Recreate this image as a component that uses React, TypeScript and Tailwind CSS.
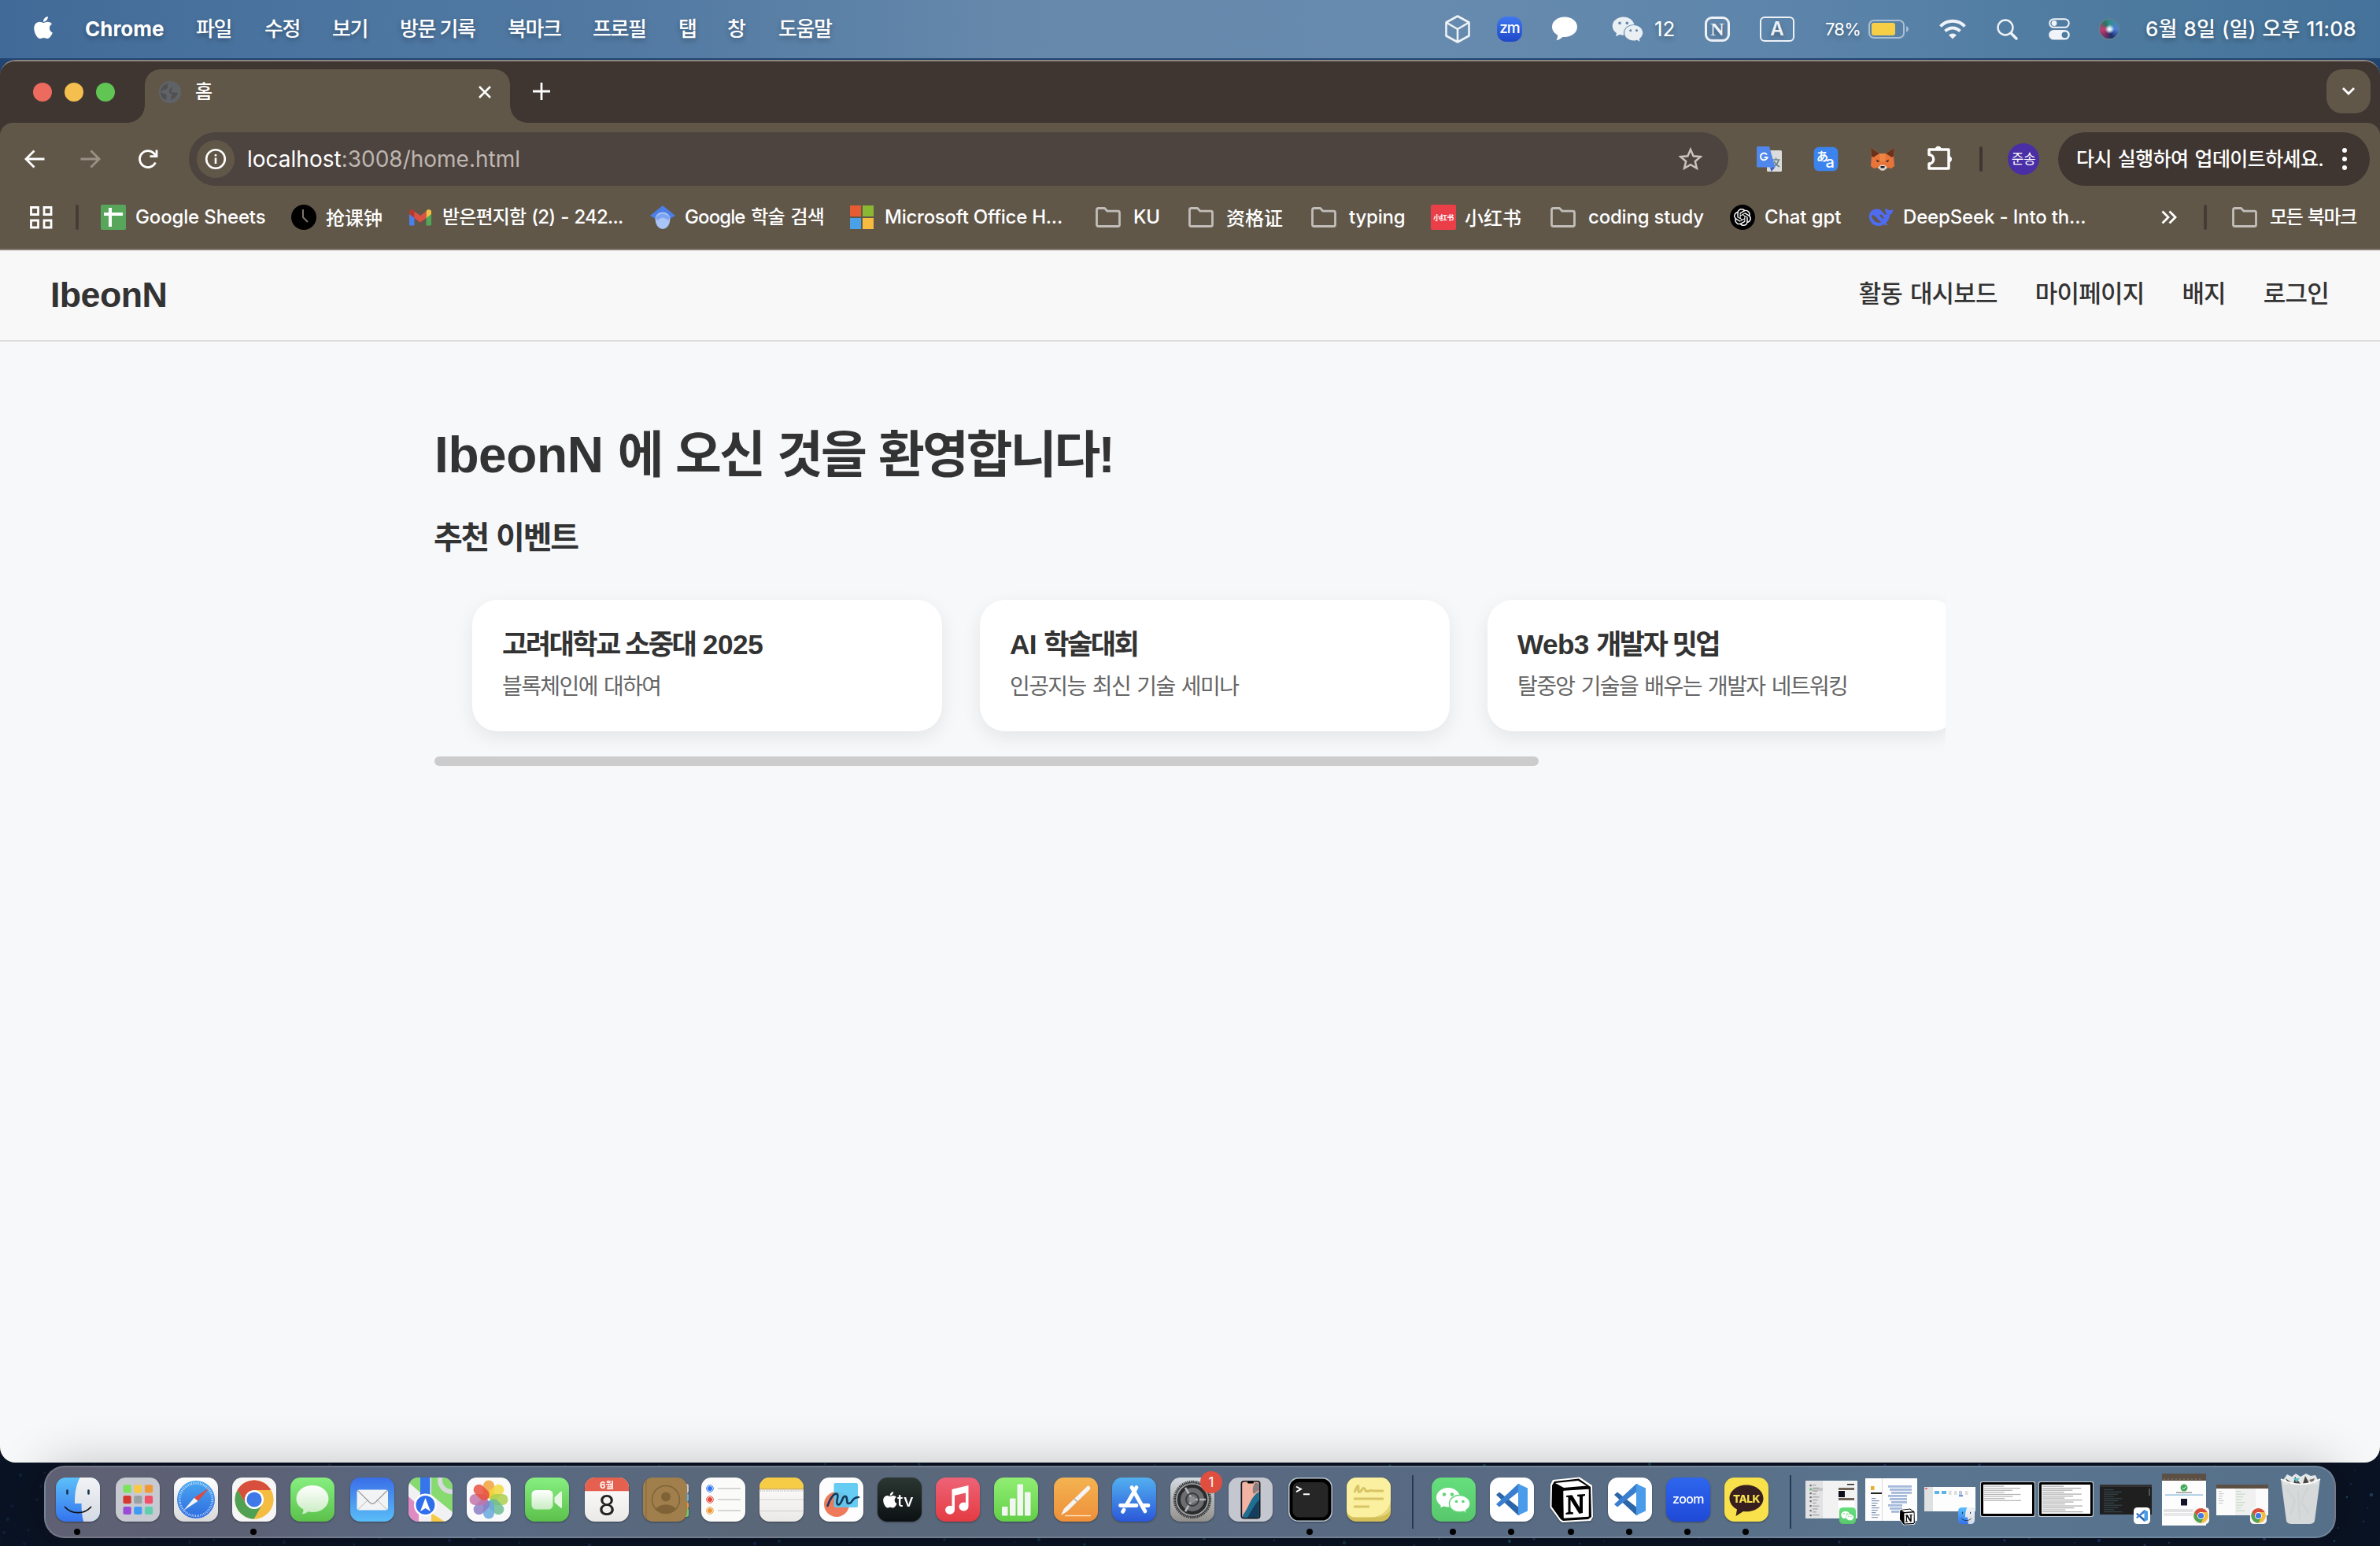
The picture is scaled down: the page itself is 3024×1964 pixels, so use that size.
import type { ReactNode } from "react";
import { FaApple } from "react-icons/fa";
import { AiFillWechat } from "react-icons/ai";
import { SiOpenai } from "react-icons/si";

/* ---------- shared logos ---------- */

function ChromeLogo() {
  return (
    <g>
      <circle cx="28" cy="28" r="24.5" fill="#f4bd41" />
      <path d="M28 28 L6.8 15.8 A24.5 24.5 0 0 1 49.2 15.8 Z" fill="#d94f3d" />
      <path d="M28 16 H49.2 A24.5 24.5 0 0 0 6.8 15.8 L17.6 34 Z" fill="#d94f3d" />
      <path d="M6.8 15.8 A24.5 24.5 0 0 0 28 52.5 L38.4 34 L28 28 L17.6 34 Z" fill="#50a154" />
      <path d="M38.4 34 L28 52.5 A24.5 24.5 0 0 0 49.2 16 H28 Z" fill="#f4bd41" />
      <circle cx="28" cy="28" r="12" fill="#fff" />
      <circle cx="28" cy="28" r="9.6" fill="#3f79e8" />
    </g>
  );
}

function CodeLogo() {
  return (
    <g>
      <path d="M8 22 L12 18.5 L38 39 V47.5 L36 48 Z" fill="#2a66a8" />
      <path d="M8 34 L12 37.5 L38 17 V8.500 L36 8 Z" fill="#3a7fcf" />
      <path d="M36 8 L48 13.500 V42.500 L36 48 Z" fill="#4a9bea" />
    </g>
  );
}

function ChatPair() {
  return (
    <g>
      <path
        d="M21 13 C12.500 13 6 18.600 6 25.500 C6 29.600 8.200 33 11.500 35.200 L11.500 38 L15.500 36.600 C17.300 37.200 19 37.500 21 37.500 C29.300 37.500 36 32.300 36 25.500 C36 18.600 29.500 13 21 13 Z"
        fill="#fff"
      />
      <circle cx="16" cy="21.500" r="2.200" fill="#5fd475" />
      <circle cx="26" cy="21.500" r="2.200" fill="#5fd475" />
      <path
        d="M35.500 22.500 C28 22.500 22.500 27.400 22.500 33.300 C22.500 39.400 28 44 35.500 44 C37.200 44 38.800 43.700 40.300 43.200 L44 45 L43.700 41.700 C47 39.600 49 36.700 49 33.300 C49 27.400 43 22.500 35.500 22.500 Z"
        fill="#fff"
        stroke="#62d578"
        strokeWidth="1.500"
      />
      <circle cx="31.500" cy="30.500" r="1.800" fill="#5fd475" />
      <circle cx="40" cy="30.500" r="1.800" fill="#5fd475" />
    </g>
  );
}

function FinderFace() {
  return (
    <g>
      <rect width="56" height="56" rx="12.500" fill="url(#finderBlue)" />
      <path d="M30.500 0 H43.500 A12.500 12.500 0 0 1 56 12.500 V43.500 A12.500 12.500 0 0 1 43.500 56 H35 C33.500 50 32.500 42 32.500 33 H24.500 C23.500 33 24 32 24 31 C24 19 26 9 30.500 0 Z" fill="url(#finderWhite)" />
      <path d="M14.500 16.500 V20.500 M41.500 16.500 V20.500" stroke="#16324f" strokeWidth="2.600" strokeLinecap="round" />
      <path d="M11.500 37.500 C20 47 36 47 44.500 37.500" fill="none" stroke="#111" strokeWidth="1.800" strokeLinecap="round" />
    </g>
  );
}

function NotionCube() {
  return (
    <g>
      <path d="M1 9 L4 3 L38 -0.500 L54 10 L55 50 L52 55 L16 57 L13 55 L0.500 38 Z" fill="#fff" />
      <path d="M3 10 L6 5 L37 1.500 L52 12 L53 50 L49 53 L17 55 L14 53 L2.500 37 Z" fill="#000" />
      <path d="M7 7 L36 4 L47 10.500 L18 13 Z" fill="#fff" />
      <path d="M18 17.500 L49 15.500 V49 L18.500 51 Z" fill="#fff" stroke="#fff" strokeWidth="1.500" strokeLinejoin="round" />
      <path d="M21 23 L28.500 22.300 L38 38 V24.500 L35 23.800 V21.700 L45 21 V23 L42 24 V45 L37.500 46 L26.500 28.500 V43.500 L30 44.500 V46.500 L20.500 47 V45 L23.500 44 V25 L21 24.800 Z" fill="#000" />
    </g>
  );
}

function Tile({ fill, children }: { fill: string; children?: ReactNode }) {
  return (
    <>
      <rect width="56" height="56" rx="12.500" fill={fill} />
      {children}
    </>
  );
}

/* ---------- dock icons (56 x 56 units) ---------- */

const launchColors = ["#7be35c", "#f7c945", "#ef9a37", "#d5382f", "#98a0a3", "#f0506a", "#9a4bd8", "#3f9bf5", "#5fcfae"];
const petals = ["#f2a23c", "#f0d83b", "#a9cf4d", "#6dbd92", "#6aa7dc", "#8b7cc4", "#c176a8", "#e8503e"];

const apps: Record<string, ReactNode> = {
  finder: <FinderFace />,
  launchpad: (
    <Tile fill="#c8cad2">
      {launchColors.map((c, i) => (
        <rect key={c} x={9.500 + (i % 3) * 13.700} y={9.300 + Math.floor(i / 3) * 13.800} width="10.200" height="10.200" rx="2" fill={c} />
      ))}
    </Tile>
  ),
  safari: (
    <Tile fill="url(#whiteGrey)">
      <circle cx="28" cy="28" r="24" fill="url(#safariBlue)" />
      <circle cx="28" cy="28" r="20.800" fill="none" stroke="#e6f2ff" strokeWidth="3" strokeDasharray="0.700 1.480" />
      <path d="M45 13 L30.500 30 L25.800 25.700 Z" fill="#e2473c" />
      <path d="M12 42 L30.500 30 L25.800 25.700 Z" fill="#f3f4f6" />
    </Tile>
  ),
  chrome: (
    <Tile fill="#f6f6f6">
      <ChromeLogo />
    </Tile>
  ),
  messages: (
    <Tile fill="url(#green)">
      <path d="M28 10 C16 10 7.500 17.500 7.500 27 C7.500 33 11 37.500 16.500 40.500 C16.500 43 15.700 45 14.500 46.500 C18 46.300 20.500 45 22.300 43.300 C24 43.800 26 44 28 44 C40 44 48.500 36.500 48.500 27 C48.500 17.500 40 10 28 10 Z" fill="url(#bubble)" />
    </Tile>
  ),
  mail: (
    <Tile fill="url(#mailBlue)">
      <rect x="8.500" y="15.500" width="39.500" height="26" rx="3" fill="#f2f3f4" />
      <path d="M9.500 41 L23 28 M47 41 L33.500 28" stroke="#b4b6b9" strokeWidth="1" />
      <path d="M9.500 16.500 L24.500 31.500 Q28.200 35 32 31.500 L47 16.500" fill="none" stroke="#9b9da0" strokeWidth="1.200" />
    </Tile>
  ),
  maps: (
    <g clipPath="url(#tileClip)">
      <rect width="56" height="56" fill="#f1f1f3" />
      <path d="M0 0 H16 V20 L0 6 Z M29 0 H56 V44 L29 22 Z" fill="#86da6f" />
      <path d="M0 24 L13 36 V56 H0 Z" fill="#e08ac4" />
      <path d="M46 56 L26 40 V22 L56 48 V56 Z" fill="#f1f1f3" />
      <path d="M29 45 L46 56 H29 Z" fill="#f6ca45" />
      <rect x="15" width="12.500" height="30" fill="#3574ea" />
      <circle cx="55" cy="3" r="15" fill="none" stroke="#d7d9dc" strokeWidth="6" />
      <circle cx="21.500" cy="35" r="14.500" fill="#fff" />
      <circle cx="21.500" cy="35" r="12" fill="#2f6fee" />
      <path d="M21.500 26 L28 43 L21.500 39 L15 43 Z" fill="#fff" />
    </g>
  ),
  photos: (
    <Tile fill="#fafafa">
      {petals.map((c, i) => (
        <rect key={c} x="21" y="3.500" width="14" height="23" rx="7" fill={c} fillOpacity="0.850" transform={`rotate(${i * 45} 28 28)`} />
      ))}
    </Tile>
  ),
  facetime: (
    <Tile fill="url(#green)">
      <rect x="8.500" y="16" width="27" height="24.500" rx="5.500" fill="url(#bubble)" />
      <path d="M37.500 25 L45.500 17.800 Q47 17 47 19 V38 Q47 39.500 45.500 38.500 L37.500 31.500 Z" fill="#e6f6e2" />
    </Tile>
  ),
  calendar: (
    <Tile fill="url(#paper)">
      <path d="M0 17.300 V12.500 A12.500 12.500 0 0 1 12.500 0 H43.500 A12.500 12.500 0 0 1 56 12.500 V17.300 Z" fill="#e5604f" />
      <text x="28" y="13.500" textAnchor="middle" fontSize="11.500" fontWeight="700" fill="#fff" fontFamily="Inter, 'Noto Sans CJK KR', sans-serif">6월</text>
      <text x="28" y="47.500" textAnchor="middle" fontSize="35" fontWeight="400" fill="#222" fontFamily="Inter, sans-serif">8</text>
    </Tile>
  ),
  contacts: (
    <g>
      <rect x="50" y="8" width="8" height="12" rx="3" fill="#c9c9c9" />
      <rect x="50" y="20" width="8" height="11" rx="3" fill="#63b4e8" />
      <rect x="50" y="31" width="8" height="9" rx="3" fill="#ef9336" />
      <rect x="50" y="39" width="8" height="11" rx="3" fill="#69d36b" />
      <rect width="56" height="56" rx="12.500" fill="#a07f4c" />
      <path d="M4 3 V53" stroke="#86683a" strokeWidth="1" />
      <circle cx="29" cy="28" r="17.500" fill="none" stroke="#7f6336" strokeWidth="1.500" />
      <circle cx="29" cy="24.500" r="6" fill="#7f6336" />
      <path d="M16.500 40 C20 32.500 38 32.500 41.500 40 C36 47 22 47 16.500 40 Z" fill="#7f6336" />
    </g>
  ),
  reminders: (
    <Tile fill="#fbfbfa">
      {["#2f74ee", "#e4473a", "#ee9733"].map((c, i) => (
        <g key={c}>
          <circle cx="11" cy={14 + i * 14} r="4.300" fill="none" stroke={c} strokeWidth="1" />
          <circle cx="11" cy={14 + i * 14} r="3" fill={c} />
          <path d={`M21 ${14 + i * 14} H50`} stroke="#c9c9ca" strokeWidth="1.500" />
        </g>
      ))}
    </Tile>
  ),
  notes: (
    <Tile fill="url(#paper)">
      <path d="M0 14 V12.500 A12.500 12.500 0 0 1 12.500 0 H43.500 A12.500 12.500 0 0 1 56 12.500 V14 Z" fill="#f6cb45" />
      <path d="M0 14.800 H56" stroke="#b9912f" strokeWidth="1" />
      <path d="M1 17 H56" stroke="#bbb" strokeWidth="1.500" strokeDasharray="1 1.300" />
      <path d="M0 28 H56 M0 42.500 H56" stroke="#cfcfcf" strokeWidth="1" />
    </Tile>
  ),
  freeform: (
    <Tile fill="#fdfdfd">
      <circle cx="22" cy="34" r="16" fill="#ee7a5b" />
      <rect x="18.500" y="7" width="30.500" height="31" rx="2" fill="#5bc8f2" fillOpacity="0.930" />
      <path d="M10.500 36 C14 26 19 19 22.500 21 C26 23 19 33 24 34.500 C29 35 29 22 33.500 24 C37 26 33 33.500 38 33 C43 32 41 25 50 25" fill="none" stroke="#123b5d" strokeWidth="2.600" strokeLinecap="round" />
    </Tile>
  ),
  tv: (
    <Tile fill="url(#tvDark)">
      <g transform="translate(7 16.500) scale(0.046)" fill="#fff">
        <path d="M318.700 268.700c-.2-36.700 16.400-64.400 50-84.800-18.800-26.900-47.200-41.700-84.700-44.600-35.500-2.800-74.300 20.700-88.500 20.700-15 0-49.400-19.700-76.400-19.700C63.300 141.200 4 184.800 4 273.500q0 39.300 14.400 81.200c12.800 36.700 59 126.700 107.200 125.200 25.200-.6 43-17.900 75.800-17.900 31.800 0 48.300 17.900 76.400 17.900 48.600-.7 90.400-82.500 102.600-119.300-65.200-30.700-61.700-90-61.700-91.900zm-56.600-164.200c27.300-32.400 24.800-61.900 24-72.500-24.100 1.400-52 16.400-67.900 34.900-17.500 19.800-27.800 44.300-25.600 71.900 26.100 2 49.900-11.400 69.500-34.300z" />
      </g>
      <text x="25" y="36.500" fontSize="22" fontWeight="500" fill="#fff" fontFamily="Inter, sans-serif">tv</text>
    </Tile>
  ),
  music: (
    <Tile fill="url(#musicRed)">
      <path d="M20.500 15 L41.500 10 V36.500 A6 5.500 0 1 1 38 32 V19.500 L24 22.800 V41 A6 5.500 0 1 1 20.500 36.200 Z" fill="#fff" />
    </Tile>
  ),
  numbers: (
    <Tile fill="url(#numbersGreen)">
      <rect x="10" y="37" width="7.500" height="11.500" rx="1" fill="#f3f7f2" />
      <rect x="20" y="26.500" width="7.500" height="22" rx="1" fill="#f3f7f2" />
      <rect x="29.500" y="8.500" width="7.500" height="40" rx="1" fill="#f3f7f2" />
      <rect x="39" y="18.500" width="7.500" height="30" rx="1" fill="#f3f7f2" />
    </Tile>
  ),
  pages: (
    <Tile fill="url(#pagesOrange)">
      <path d="M43 10.500 Q47 10.500 46 15 L17 43 L9 48 L13 39.500 Z" fill="#f4f4f5" />
      <path d="M26 27 L30 31" stroke="#a9a9ad" strokeWidth="1.500" />
      <path d="M14 48.500 H47" stroke="#ffe0b8" strokeWidth="1.600" />
    </Tile>
  ),
  appstore: (
    <Tile fill="url(#storeBlue)">
      <path d="M31 12.500 L17.500 36 M25 12.500 L42 43 M10.500 35.500 H31 M38 35.500 H46 M15 41 L13.500 43.500" stroke="#fff" strokeWidth="4.800" strokeLinecap="round" />
    </Tile>
  ),
  settings: (
    <Tile fill="url(#settingsGrey)">
      <circle cx="28" cy="28" r="22.500" fill="#6b6d70" stroke="#36383a" strokeWidth="3.500" strokeDasharray="1.400 0.900" />
      <circle cx="28" cy="28" r="17.500" fill="none" stroke="#2a2b2d" strokeWidth="5" />
      <circle cx="28" cy="28" r="20" fill="none" stroke="#a5a7a8" strokeWidth="1.500" />
      <path d="M28 28 H45 M28 28 L19 13 M28 28 L19 43" stroke="#b3b5b6" strokeWidth="2.600" />
      <circle cx="28" cy="28" r="8" fill="none" stroke="#3a3b3d" strokeWidth="2" />
      <circle cx="28" cy="28" r="4" fill="#8b8d8f" />
    </Tile>
  ),
  mirroring: (
    <Tile fill="#c4c7cf">
      <rect x="15.500" y="4" width="25" height="48.500" rx="4" fill="#17181b" />
      <rect x="17.200" y="5.500" width="21.600" height="45.500" rx="2.800" fill="#f1b3a2" />
      <path d="M38.800 18 C28 24 26 38 18 48 V51 H36 Q38.800 51 38.800 48 Z" fill="#1f6f93" />
      <path d="M38.800 28 C32 36 28 44 24 51 H36 Q38.800 51 38.800 48 Z" fill="#153e5c" />
      <path d="M34 6 C30 12 30 18 32 21 L38.800 16 V8 Z" fill="#8c7f80" />
      <rect x="24" y="5" width="8" height="2.600" rx="1.300" fill="#000" />
    </Tile>
  ),
  terminal: (
    <Tile fill="#b9c6cf">
      <rect x="1.500" y="1.500" width="53" height="53" rx="11.500" fill="#000" />
      <rect x="5.500" y="6" width="45" height="44.500" rx="8" fill="#262626" />
      <path d="M10 11.500 L16 14.800 L10 18.200 M19 21.300 H27" fill="none" stroke="#fff" strokeWidth="1.900" />
    </Tile>
  ),
  stickies: (
    <Tile fill="#d2bf58">
      <path d="M12.500 0 H43.500 A12.500 12.500 0 0 1 56 12.500 V30 C54 42 44 50 32 50.500 H10 A10 10 0 0 1 0 41 V12.500 A12.500 12.500 0 0 1 12.500 0 Z" fill="#faf0a0" />
      <path d="M56 30 C54 42 44 50 32 50.500 C44 50.500 52 48 55.500 42 Z" fill="#e5d67c" />
      <path d="M10 19 C13 11 15 8 15 13 C14 20 16 20 20 15 C21 12 24 14 24 17 C27 19 30 15 33 17 H47 M9 27 H47 M9 37 H29" fill="none" stroke="#d8c466" strokeWidth="3" />
    </Tile>
  ),
  wechat: (
    <Tile fill="url(#wechatGreen)">
      <ChatPair />
    </Tile>
  ),
  vscode: (
    <Tile fill="#fff">
      <CodeLogo />
    </Tile>
  ),
  notion: <NotionCube />,
  zoom: (
    <Tile fill="url(#zoomBlue)">
      <text x="28" y="32.500" textAnchor="middle" fontSize="16" fontWeight="500" letterSpacing="-0.600" fill="#fff" fontFamily="Inter, sans-serif">zoom</text>
    </Tile>
  ),
  kakao: (
    <Tile fill="#f8e14b">
      <path d="M28 9.500 C16 9.500 6.500 17 6.500 26.500 C6.500 32.500 10.500 37.500 16 40.500 L14.500 49 L24 43 C25.300 43.200 26.600 43.300 28 43.300 C40 43.300 49.500 36 49.500 26.500 C49.500 17 40 9.500 28 9.500 Z" fill="#381f1f" />
      <text x="28" y="31.500" textAnchor="middle" fontSize="13.500" fontWeight="800" letterSpacing="-0.500" fill="#f8e14b" fontFamily="Inter, sans-serif">TALK</text>
    </Tile>
  ),
};

const stops: [string, string, string][] = [
  ["finderBlue", "#5cc0f8", "#3574ee"],
  ["finderWhite", "#f3f3f5", "#d3dae4"],
  ["whiteGrey", "#ffffff", "#d9d9d9"],
  ["safariBlue", "#4aa8f0", "#2e6be0"],
  ["green", "#86ef80", "#5cc14b"],
  ["bubble", "#ffffff", "#c9ecc2"],
  ["mailBlue", "#3a6ee8", "#5abdf7"],
  ["paper", "#ffffff", "#ebe9e6"],
  ["tvDark", "#2b3732", "#0c1012"],
  ["musicRed", "#ee6377", "#e43b42"],
  ["numbersGreen", "#91ef74", "#63ce48"],
  ["pagesOrange", "#f4b350", "#ee8f3a"],
  ["storeBlue", "#52b0f0", "#2b58d8"],
  ["settingsGrey", "#d3dae0", "#93908c"],
  ["wechatGreen", "#66df7d", "#58c76c"],
  ["zoomBlue", "#2f66ee", "#1f49d8"],
];

function Defs() {
  return (
    <svg className="absolute h-0 w-0">
      <defs>
        {stops.map(([id, from, to]) => (
          <linearGradient key={id} id={id} x1="0" y1="0" x2="0" y2="1">
            <stop offset="0" stopColor={from} />
            <stop offset="1" stopColor={to} />
          </linearGradient>
        ))}
        <clipPath id="tileClip">
          <rect width="56" height="56" rx="12.500" />
        </clipPath>
      </defs>
    </svg>
  );
}

function DockIcon({ name, wide, running, badge }: { name: string; wide?: boolean; running?: boolean; badge?: string }) {
  return (
    <div className={`relative h-[56px] w-[56px] shrink-0 ${wide ? "ml-[2px]" : ""}`}>
      <svg viewBox="0 0 56 56" className="h-[56px] w-[56px] overflow-visible drop-shadow-[0_1px_1px_rgba(0,0,0,0.35)]">
        {apps[name]}
      </svg>
      {badge && (
        <span className="absolute -top-[8px] left-[38px] flex h-[28px] w-[28px] items-center justify-center rounded-full bg-[#e04e40] text-[17px] leading-none text-white">
          {badge}
        </span>
      )}
      {running && <span className="absolute top-[65px] left-[23px] h-2 w-2 rounded-full bg-black" />}
    </div>
  );
}

/* ---------- minimised windows ---------- */

function Lines({ x, y, n, w, gap, color }: { x: number; y: number; n: number; w: number; gap: number; color: string }) {
  return (
    <>
      {Array.from({ length: n }, (_, i) => (
        <rect key={i} x={x} y={y + i * gap} width={w * (0.45 + ((i * 37) % 55) / 100)} height="1.200" fill={color} />
      ))}
    </>
  );
}

function MiniWindow({ w, h, children }: { w: number; h: number; children: ReactNode }) {
  return (
    <svg viewBox={`0 0 ${w} ${h}`} width={w} height={h} className="shrink-0">
      {children}
    </svg>
  );
}

function Badge({ name, className }: { name: string; className: string }) {
  return (
    <svg viewBox="0 0 56 56" className={`absolute h-[21px] w-[21px] overflow-visible ${className}`}>
      {apps[name]}
    </svg>
  );
}

function MinimisedWindows() {
  return (
    <div className="flex h-[66px] items-start">
      <div className="relative mt-[9px] mr-[10px]">
        <MiniWindow w={66} h={48}>
          <rect width="66" height="48" fill="#f2f2f3" />
          <rect width="22" height="48" fill="#e2e2e4" />
          <rect x="5" y="9" width="17" height="4" fill="#c7c7c9" />
          <Lines x={9} y={5} n={11} w={10} gap={3.800} color="#a2a2a4" />
          {[5, 10, 15, 20, 25, 31, 37, 43].map((y) => (
            <rect key={y} x="5.500" y={y} width="2.200" height="2.200" fill={y === 10 ? "#4fc26a" : "#666"} />
          ))}
          <rect x="42" y="9" width="20" height="3" fill="#6f6257" />
          <rect x="42" y="13" width="8" height="8" fill="#10101c" />
          <rect x="42" y="22" width="20" height="3" fill="#6f6257" />
          <rect x="42" y="25" width="20" height="10" fill="#fff" />
          <rect x="53" y="4" width="9" height="1.500" fill="#222" />
        </MiniWindow>
        <Badge name="wechat" className="top-[34px] left-[43px]" />
      </div>
      <div className="relative mt-[6px] mr-[9px]">
        <MiniWindow w={66} h={54}>
          <rect width="66" height="54" fill="#fdfdfd" />
          <rect x="7" y="10" width="4.500" height="5" fill="#e4b22f" />
          <rect x="7" y="18" width="14" height="2" fill="#222" />
          <Lines x={8} y={25} n={9} w={12} gap={3} color="#8396b5" />
          <path d="M21.500 0 V54" stroke="#ddd" />
          {[9, 13, 17, 21, 25, 29, 33, 37, 41].map((y, i) => (
            <rect key={y} x={29 + (i % 3) * 2} y={y} width={30 - i * 2} height="2.800" fill="#a5b9da" />
          ))}
        </MiniWindow>
        <Badge name="notion" className="top-[38px] left-[43px]" />
      </div>
      <div className="relative mt-[17px] mr-[6px]">
        <MiniWindow w={65} h={31}>
          <rect width="65" height="31" fill="#fdfdfd" />
          <rect width="11" height="31" fill="#dfe0e2" />
          <path d="M1 2 H4" stroke="#e55" strokeWidth="1.500" />
          <rect x="13" y="5" width="6" height="4" fill="#5cb5ea" />
          <rect x="22" y="5" width="6" height="4" fill="#5cb5ea" />
          <rect x="31" y="5" width="3.500" height="5" fill="#ddd" />
          <rect x="38" y="5" width="3.500" height="5" fill="#ddd" />
          <rect x="44" y="5" width="4" height="5" fill="#bcc8dd" />
          <rect x="44" y="10.500" width="5" height="1.500" fill="#2a67d8" />
          <rect x="52" y="5" width="3.500" height="5" fill="#ddd" />
        </MiniWindow>
        <Badge name="finder" className="top-[26px] left-[43px]" />
      </div>
      <div className="mt-[10px] mr-[4px]">
        <MiniWindow w={70} h={45}>
          <rect width="70" height="45" rx="2" fill="#c9ced3" />
          <rect x="1" y="1" width="68" height="43" rx="2" fill="#000" />
          <rect x="4" y="4" width="62" height="37" fill="#fff" />
          <Lines x={5} y={5.500} n={8} w={56} gap={2.600} color="#b4b4b4" />
        </MiniWindow>
      </div>
      <div className="mt-[10px] mr-[8px]">
        <MiniWindow w={70} h={45}>
          <rect width="70" height="45" rx="2" fill="#c9ced3" />
          <rect x="1" y="1" width="68" height="43" rx="2" fill="#000" />
          <rect x="4" y="4" width="62" height="37" fill="#fff" />
          <Lines x={5} y={5.500} n={14} w={60} gap={2.500} color="#a8a8a8" />
        </MiniWindow>
      </div>
      <div className="relative mt-[14px] mr-[13px]">
        <MiniWindow w={66} h={38}>
          <rect width="66" height="38" fill="#1f1f20" />
          <rect width="66" height="3" fill="#313133" />
          <Lines x={5} y={6} n={11} w={28} gap={2.800} color="#35454a" />
          <rect x="62" y="5" width="2" height="9" fill="#555" />
        </MiniWindow>
        <Badge name="vscode" className="top-[29px] left-[43px]" />
      </div>
      <div className="relative mr-[13px]">
        <MiniWindow w={56} h={66}>
          <rect width="56" height="66" fill="#fdfdfd" />
          <rect width="56" height="9" fill="#5c5044" />
          <path d="M2 7 H50" stroke="#8d8078" strokeWidth="1" strokeDasharray="2 3" />
          <circle cx="28" cy="18" r="4.500" fill="#43a95a" />
          <path d="M26 18 L27.500 19.500 L30.500 16.500" fill="none" stroke="#fff" />
          <rect x="18" y="23.500" width="20" height="1.500" fill="#999" />
          <rect x="4" y="26.500" width="48" height="1.200" fill="#7cb4d8" />
          <rect x="24" y="32" width="8" height="8.500" fill="#14142c" />
          <rect x="2" y="45" width="44" height="4" fill="#e2e2e4" />
          <rect x="2" y="50" width="44" height="4" fill="#e8e8ea" />
        </MiniWindow>
        <Badge name="chrome" className="top-[43px] left-[39px]" />
      </div>
      <div className="relative mt-[14px] mr-[16px]">
        <MiniWindow w={66} h={39}>
          <rect width="66" height="39" fill="#fbfbfb" />
          <rect width="66" height="5" fill="#5c5044" />
          <rect x="24" y="5" width="26" height="34" fill="#f0f0f1" />
          <Lines x={25} y={8} n={8} w={14} gap={3.500} color="#c5dcc4" />
          <Lines x={3} y={8} n={6} w={8} gap={3} color="#ccc" />
        </MiniWindow>
        <Badge name="chrome" className="top-[29px] left-[43px]" />
      </div>
      <svg viewBox="0 0 50 64" className="h-[64px] w-[50px] overflow-visible">
        <path d="M3 8 L8 1 L14 4 L19 0 L25 4 L32 0 L38 3 L44 2 L47 8 V14 H3 Z" fill="#e4e7e8" />
        <path d="M6 6 L14 12 L10 14 Z M18 4 L25 13 L16 13 Z M31 3 L36 12 L28 13 Z" fill="#4a4542" />
        <path d="M16 6 L24 6 L20 11 Z" fill="#59c2c8" />
        <path d="M36 8 L43 6 L40 13 Z" fill="#7a706a" />
        <path d="M0 7 Q25 20 50 7 L43 60 Q42 64 36 64 H14 Q8 64 7 60 Z" fill="#dfe1e0" fillOpacity="0.930" />
        <path d="M0 7 Q25 20 50 7" fill="none" stroke="#fff" strokeWidth="1.500" />
        <path d="M8 20 L18 34 L12 52 M34 18 L26 36 L36 50 M22 22 L24 58" fill="none" stroke="#d0d3d3" strokeWidth="2.500" />
      </svg>
    </div>
  );
}

const dockMain = [
  "finder", "launchpad", "safari", "chrome", "messages", "mail", "maps", "photos", "facetime", "calendar", "contacts",
  "reminders", "notes", "freeform", "tv", "music", "numbers", "pages", "appstore", "settings", "mirroring", "terminal", "stickies",
];
const dockRecent = ["wechat", "vscode", "notion", "vscode", "zoom", "kakao"];
const runningApps = ["finder", "chrome", "terminal"];

function Dock() {
  return (
    <div className="relative z-10 mt-1 ml-[56px] flex h-[92px] w-[2912px] shrink-0 items-start rounded-[26px] border-2 border-white/15 bg-[linear-gradient(90deg,#5f6073_0%,#5c6175_9%,#586a84_18%,#5a6778_32%,#586982_55%,#596d85_70%,#5a7590_82%,#56708a_100%)] pl-[13px] shadow-[0_0_64px_rgba(0,0,0,0.24)]">
      <div className="mt-[13px] flex gap-[18px]">
        {dockMain.map((n, i) => (
          <DockIcon key={n} name={n} wide={i % 4 === 1} running={runningApps.includes(n)} badge={n === "settings" ? "1" : undefined} />
        ))}
      </div>
      <div className="mt-[10px] ml-[27px] h-[68px] w-[2px] bg-[#233a56]" />
      <div className="mt-[13px] ml-[23px] flex gap-[18px]">
        {dockRecent.map((n, i) => (
          <DockIcon key={i} name={n} wide={i === 2} running />
        ))}
      </div>
      <div className="mt-[10px] ml-[27px] h-[68px] w-[2px] bg-[#233a56]" />
      <div className="mt-[8px] ml-[18px]">
        <MinimisedWindows />
      </div>
    </div>
  );
}

/* ---------- menu bar ---------- */

function Slot({ className, children }: { className: string; children: ReactNode }) {
  return <div className={`flex h-full shrink-0 items-center whitespace-nowrap ${className}`}>{children}</div>;
}

function MenuBar() {
  return (
    <div className="flex h-[74px] shrink-0 items-center bg-[linear-gradient(90deg,#426a98_0%,#4a749f_12%,#5179a2_26%,#6588ab_42%,#678bae_60%,#5c84aa_76%,#4c799e_90%,#45729a_100%)] pl-[39px] text-[26px] leading-none font-medium text-white [text-shadow:0_3px_6px_rgba(0,0,0,0.3)]">
      <Slot className="w-[69px] pb-[4px]">
        <FaApple size={32} />
      </Slot>
      <Slot className="w-[141px] font-bold">Chrome</Slot>
      <Slot className="w-[87px] tracking-[-1.4px]">파일</Slot>
      <Slot className="w-[86px] tracking-[-1.4px]">수정</Slot>
      <Slot className="w-[86px] tracking-[-1.4px]">보기</Slot>
      <Slot className="w-[137px] tracking-[-1.4px]">방문 기록</Slot>
      <Slot className="w-[108px] tracking-[-1.4px]">북마크</Slot>
      <Slot className="w-[109px] tracking-[-1.4px]">프로필</Slot>
      <Slot className="w-[62px]">탭</Slot>
      <Slot className="w-[65px]">창</Slot>
      <Slot className="w-[847px] tracking-[-1.4px]">도움말</Slot>

      <Slot className="w-[66px]">
        <svg width="32" height="36" viewBox="0 0 32 36" fill="none" stroke="#eef2f6" strokeWidth="2.600" strokeLinejoin="round">
          <path d="M16 1.500 L30.500 9.500 V26.500 L16 34.500 L1.500 26.500 V9.500 Z M1.500 9.500 L16 18 L30.500 9.500 M16 18 V34.500" />
        </svg>
      </Slot>
      <Slot className="w-[70px]">
        <div className="flex h-8 w-8 items-center justify-center rounded-[12px] bg-[linear-gradient(#3f78f0,#1f48c8)] pb-[3px] text-[19px] tracking-[-1px] [text-shadow:none]">zm</div>
      </Slot>
      <Slot className="w-[76px] pb-[2px]">
        <svg width="32" height="31" viewBox="0 0 32 31" fill="#fff">
          <path d="M16 0.500 C7 0.500 0 6 0 13 C0 17.500 2.800 21.300 7.200 23.600 C7.200 26.500 6.400 28.700 5.600 30.200 C9 29.500 11.800 27.700 13.300 25.900 C24 26.800 32 21 32 13 C32 6 25 0.500 16 0.500 Z" />
        </svg>
      </Slot>
      <Slot className="w-[54px]">
        <AiFillWechat size={44} className="-ml-[2px] shrink-0" color="#eaeff4" />
      </Slot>
      <Slot className="w-[64px] font-normal">12</Slot>
      <Slot className="w-[70px]">
        <div className="flex h-8 w-8 items-center justify-center rounded-[9px] border-[3.5px] border-[#eef2f6] font-['Liberation_Serif'] text-[24px] font-bold text-[#eef2f6]">N</div>
      </Slot>
      <Slot className="w-[83px]">
        <div className="flex h-8 w-11 items-center justify-center rounded-[6px] border-2 border-[#eef2f6] text-[24px] font-semibold text-[#eef2f6]">A</div>
      </Slot>
      <Slot className="w-[55px] text-[22px] font-normal tracking-[-0.8px]">78%</Slot>
      <Slot className="w-[90px]">
        <svg width="52" height="24" viewBox="0 0 52 24">
          <rect x="1" y="1" width="44" height="22" rx="6" fill="none" stroke="#a9bfd3" strokeWidth="2" />
          <rect x="4" y="4" width="30" height="16" rx="3" fill="#f8ce46" />
          <path d="M48 8 Q51 9.500 51 12 Q51 14.500 48 16 Z" fill="#a9bfd3" />
        </svg>
      </Slot>
      <Slot className="w-[73px]">
        <svg width="34" height="26" viewBox="0 0 34 26" fill="none" stroke="#f0f3f7" strokeWidth="4">
          <path d="M1.500 9.500 C10 0.500 24 0.500 32.500 9.500" />
          <path d="M7.500 15.500 C13 10 21 10 26.500 15.500" />
          <path d="M17 25.500 L12 20.500 C15 17.800 19 17.800 22 20.500 Z" fill="#f0f3f7" stroke="none" />
        </svg>
      </Slot>
      <Slot className="w-[66px]">
        <svg width="27" height="27" viewBox="0 0 27 27" fill="none" stroke="#f0f3f7">
          <circle cx="11" cy="11" r="9.500" strokeWidth="2.400" />
          <path d="M18 18 L25 25" strokeWidth="3.400" strokeLinecap="round" />
        </svg>
      </Slot>
      <Slot className="w-[63px]">
        <svg width="27" height="28" viewBox="0 0 27 28">
          <rect x="1.200" y="1.200" width="24.600" height="10.600" rx="5.300" fill="none" stroke="#f0f3f7" strokeWidth="2" />
          <circle cx="7" cy="6.500" r="3.400" fill="#f0f3f7" />
          <rect x="0.200" y="15" width="26.600" height="12.600" rx="6.300" fill="#f0f3f7" />
          <circle cx="20.500" cy="21.300" r="3.900" fill="#4d7a9f" />
        </svg>
      </Slot>
      <Slot className="w-[60px]">
        <div className="h-7 w-7 rounded-full border-2 border-[#5e7f92] bg-[radial-gradient(circle_at_52%_50%,#fff_0%,#cfe6ef_12%,transparent_34%),conic-gradient(from_0deg,#2f8f8a,#4f7fd8_25%,#1d2f6c_45%,#7a2f62_60%,#c43d72_75%,#2f6f60_90%,#2f8f8a)]" />
      </Slot>
      <Slot className="tracking-[0.1px] [word-spacing:1px]">6월 8일 (일) 오후 11:08</Slot>
    </div>
  );
}

/* ---------- browser chrome ---------- */

function TabStrip() {
  return (
    <div className="flex h-[78px] shrink-0 items-end bg-[#403631]">
      <div className="flex w-[162px] gap-4 self-start pt-[27px] pl-[42px]">
        <span className="h-6 w-6 rounded-full bg-[#ec6a5e]" />
        <span className="h-6 w-6 rounded-full bg-[#f4bf4f]" />
        <span className="h-6 w-6 rounded-full bg-[#61c554]" />
      </div>
      <div className="h-[22px] w-[22px] bg-[radial-gradient(circle_at_0_0,#403631_21.5px,#615749_22px)]" />
      <div className="flex h-[68px] w-[464px] items-center rounded-t-[20px] bg-[#615749] pb-[11px] text-white">
        <svg width="30" height="30" viewBox="0 0 30 30" className="ml-[17px]">
          <circle cx="15" cy="15" r="14" fill="#5f6368" />
          <path d="M14 4 C10 6 14 9 11 11 C9 13 4 11 4 15 C4 17 9 16 10 18 C12 20 9 22 11 25 C5 24 3 19 3 15 C3 9 8 4 14 4 Z" fill="#51504f" />
          <path d="M18 8 C20 10 15 12 17 15 C20 17 23 14 25 17 C23 21 20 24 16 25 C17 21 16 20 18 18 C14 17 13 14 15 11 Z" fill="#51504f" />
        </svg>
        <span className="ml-[17px] text-[24px] leading-none font-medium">홈</span>
        <svg width="18" height="18" viewBox="0 0 18 18" className="ml-auto mr-[23px]" stroke="#fff" strokeWidth="2.600">
          <path d="M2 2 L16 16 M16 2 L2 16" />
        </svg>
      </div>
      <div className="h-[22px] w-[22px] bg-[radial-gradient(circle_at_100%_0,#403631_21.5px,#615749_22px)]" />
      <svg width="22" height="22" viewBox="0 0 22 22" className="mb-[29px] ml-[7px]" stroke="#fff" strokeWidth="2.800">
        <path d="M11 0 V22 M0 11 H22" />
      </svg>
      <div className="mr-[12px] mb-[12px] ml-auto flex h-[56px] w-[56px] items-center justify-center rounded-[20px] bg-[#615749]">
        <svg width="18" height="12" viewBox="0 0 18 12" fill="none" stroke="#fff" strokeWidth="2.800">
          <path d="M2 2 L9 9 L16 2" />
        </svg>
      </div>
    </div>
  );
}

function Toolbar() {
  return (
    <div className="flex h-[92px] shrink-0 items-center text-white">
      <svg width="26" height="24" viewBox="0 0 26 24" className="ml-[31px]" fill="none" stroke="#fff" strokeWidth="2.800">
        <path d="M25.500 12 H2.500 M12.500 1.500 L2 12 L12.500 22.500" />
      </svg>
      <svg width="26" height="24" viewBox="0 0 26 24" className="ml-[45px]" fill="none" stroke="#9a9187" strokeWidth="2.800">
        <path d="M0.500 12 H23.500 M13.500 1.500 L24 12 L13.500 22.500" />
      </svg>
      <svg width="26" height="26" viewBox="0 0 26 26" className="ml-[47px]" fill="none" stroke="#fff" strokeWidth="2.800">
        <path d="M22.500 17.500 A10.500 10.500 0 1 1 20.800 6 L23 8.500" />
        <path d="M24 1.500 V9.700 H15.500" />
      </svg>
      <div className="ml-[39px] flex h-[68px] w-[1956px] items-center rounded-full bg-[#4e443f]">
        <div className="ml-[10px] flex h-12 w-12 items-center justify-center rounded-full bg-[#615749]">
          <svg width="28" height="28" viewBox="0 0 28 28" fill="none" stroke="#fff">
            <circle cx="14" cy="14" r="11.800" strokeWidth="2.600" />
            <path d="M14 12.500 V20 M14 8 V10.600" strokeWidth="2.600" />
          </svg>
        </div>
        <span className="ml-[16px] text-[28px] leading-none text-[#bdb6b1]">
          <span className="text-white">localhost</span>:3008/home.html
        </span>
        <svg width="30" height="30" viewBox="0 0 30 30" className="mr-[33px] ml-auto" fill="none" stroke="#c9c3bd" strokeWidth="2.500">
          <path d="M15 3 L18.600 11.300 L27.600 12.100 L20.800 18 L22.900 26.800 L15 22.200 L7.100 26.800 L9.200 18 L2.400 12.100 L11.400 11.300 Z" />
        </svg>
      </div>
      <svg width="32" height="32" viewBox="0 0 32 32" className="ml-[36px]">
        <rect x="13" y="5" width="19" height="27" rx="1.500" fill="#dcdcdc" />
        <path d="M19.500 17 H29.500 M24.500 14.500 V17 M28 17 C27 21 23.500 25 20 26.500 M22 19 C23.500 22 26 24.500 29 26" stroke="#6d8488" strokeWidth="1.700" fill="none" />
        <path d="M1.500 0 H16 L23.500 26.500 H1.500 Q0 26.500 0 25 V1.500 Q0 0 1.500 0 Z" fill="#4f87ed" />
        <path d="M17 26.500 H23.500 L18.500 32 Z" fill="#3a5dc0" />
        <path d="M13 10.500 A4.400 4.400 0 1 0 13.600 14 H9.500" stroke="#fff" strokeWidth="2" fill="none" />
      </svg>
      <svg width="32" height="32" viewBox="0 0 32 32" className="ml-[40px]">
        <rect x="0.700" y="0.700" width="30.600" height="30.600" rx="6.500" fill="#3c83ee" />
        <text x="4" y="17.500" fontSize="15" fontWeight="700" fill="#fff" fontFamily="'Noto Sans CJK JP', sans-serif">あ</text>
        <text x="15.500" y="27" fontSize="20" fontWeight="500" fill="#fff" fontFamily="Inter, sans-serif">a</text>
      </svg>
      <svg width="32" height="30" viewBox="0 0 32 30" className="ml-[40px]">
        <path d="M1 1 L12 8 H20 L31 1 L30 12 L31 24 L27 27 L22 26 L18 29.500 H14 L10 26 L5 27 L1 24 L2 12 Z" fill="#e8743a" />
        <path d="M1 1 L12 8 L4 13 L2 11 Z M31 1 L20 8 L28 13 L30 11 Z" fill="#69321c" />
        <path d="M12 8 H20 L19 18 H13 Z" fill="#ef8544" />
        <path d="M8 15.500 L12.500 18 L9 19 Z M24 15.500 L19.500 18 L23 19 Z" fill="#3d2a25" />
        <path d="M12 24 L14 22.500 H18 L20 24 L22 26 L18 29.500 H14 L10 26 Z" fill="#dcdad6" />
        <path d="M13.500 24 H18.500 V26.500 H13.500 Z" fill="#24201e" />
      </svg>
      <svg width="34" height="34" viewBox="0 0 34 34" className="mt-[-4px] ml-[40px]" fill="none" stroke="#fff" strokeWidth="3.400" strokeLinejoin="round">
        <path d="M3 7 H28 V31 H3 V25 A5.400 5.400 0 0 0 3 13.500 Z" />
        <path d="M11 6 A4 4.500 0 0 1 18.500 6 Z M29 15.500 A4 4 0 0 1 29 23 Z" fill="#fff" strokeWidth="1" />
      </svg>
      <div className="ml-[33px] h-8 w-[4px] rounded-full bg-[#403631]" />
      <div className="ml-[32px] flex h-10 w-10 items-center justify-center rounded-full bg-[#4a2ea5] text-[17px] leading-none tracking-[-0.5px]">준송</div>
      <div className="ml-[24px] flex h-[68px] w-[396px] items-center rounded-full bg-[#403631] pl-[23px] text-[25px] leading-none font-medium whitespace-nowrap">
        <span className="w-[327px] tracking-[-0.6px] [word-spacing:2px]">다시 실행하여 업데이트하세요.</span>
        <svg width="8" height="30" viewBox="0 0 8 30" className="ml-[10px]" fill="#fff">
          <circle cx="4" cy="4" r="3" />
          <circle cx="4" cy="15" r="3" />
          <circle cx="4" cy="26" r="3" />
        </svg>
      </div>
    </div>
  );
}

function Folder() {
  return (
    <svg width="32" height="26" viewBox="0 0 32 26" className="mr-[16px] shrink-0" fill="none" stroke="#c1bdb8" strokeWidth="2.800" strokeLinejoin="round">
      <path d="M3.500 1.500 H11.500 L15 5.200 H28.500 Q30.500 5.200 30.500 7.200 V22.500 Q30.500 24.500 28.500 24.500 H3.500 Q1.500 24.500 1.500 22.500 V3.500 Q1.500 1.500 3.500 1.500 Z" />
    </svg>
  );
}

function BookmarksBar() {
  return (
    <div className="flex h-[68px] shrink-0 items-center pb-[12px] pl-[38px] text-[24px] leading-none font-medium text-white">
      <Slot className="w-[58px]">
        <svg width="29" height="29" viewBox="0 0 29 29" fill="none" stroke="#fff" strokeWidth="2.800">
          <path d="M1.500 1.500 H10.500 V10.500 H1.500 Z M18 1.500 H27 V10.500 H18 Z M1.500 18 H10.500 V27 H1.500 Z M18 18 H27 V27 H18 Z" />
        </svg>
      </Slot>
      <Slot className="w-[32px]">
        <span className="h-8 w-[4px] rounded-full bg-[#463c35]" />
      </Slot>
      <Slot className="w-[242px]">
        <svg width="32" height="32" viewBox="0 0 32 32" className="mr-[12px] shrink-0">
          <rect width="32" height="32" rx="2" fill="#58a65c" />
          <path d="M12 4 V28 M4 12 H28" stroke="#fff" strokeWidth="4" />
        </svg>
        <span className="tracking-[-0.15px]">Google Sheets</span>
      </Slot>
      <Slot className="w-[148px]">
        <svg width="32" height="32" viewBox="0 0 32 32" className="mr-[12px] shrink-0">
          <circle cx="16" cy="16" r="16" fill="#000" />
          <path d="M15 6 V16 L21 22" fill="none" stroke="#7b746c" strokeWidth="2" />
        </svg>
        <span className="font-['Noto_Sans_CJK_SC']">抢课钟</span>
      </Slot>
      <Slot className="w-[308px]">
        <svg width="32" height="22" viewBox="0 0 32 22" className="mr-[12px] shrink-0">
          <path d="M2 3 V20 Q2 21.500 3.500 21.500 H8.500 V9 Z" fill="#4a80ec" />
          <path d="M30 3 V20 Q30 21.500 28.500 21.500 H23.500 V9 Z" fill="#50a758" />
          <path d="M23.500 3 Q27 -1 30 3 V7 L23.500 12 Z" fill="#f2bf42" />
          <path d="M2 3 Q5 -1 8.500 3 V12 L2 7 Z" fill="#b73a30" />
          <path d="M8.500 3.500 L16 9 L23.500 3.500 V12 L16 17.500 L8.500 12 Z" fill="#dd5144" />
        </svg>
        <span className="tracking-[-0.8px] [word-spacing:1.3px]">받은편지함 (2) - 242...</span>
      </Slot>
      <Slot className="w-[254px]">
        <svg width="32" height="30" viewBox="0 0 32 30" className="mr-[12px] shrink-0">
          <path d="M16 0 L32 13 L16 22 L0 13 Z" fill="#4c7ee8" />
          <path d="M6.500 17 A9.500 8.500 0 0 1 25.500 17 Q25 29 16 30 Q7 29 6.500 17 Z" fill="#a9c4f7" />
          <path d="M7 15 Q16 6 25 15 L23 19 Q16 12 9 19 Z" fill="#7da4f2" />
        </svg>
        <span className="tracking-[-0.9px] [word-spacing:2.3px]">Google 학술 검색</span>
      </Slot>
      <Slot className="w-[312px]">
        <svg width="30" height="30" viewBox="0 0 30 30" className="mr-[14px] shrink-0">
          <path d="M0 0 H14 V14 H0 Z" fill="#e65b32" />
          <path d="M16 0 H30 V14 H16 Z" fill="#8ab833" />
          <path d="M0 16 H14 V30 H0 Z" fill="#4ba1e8" />
          <path d="M16 16 H30 V30 H16 Z" fill="#f5bc40" />
        </svg>
        <span className="tracking-[-0.25px]">Microsoft Office H...</span>
      </Slot>
      <Slot className="w-[118px]">
        <Folder />
        <span className="tracking-[-0.3px]">KU</span>
      </Slot>
      <Slot className="w-[156px]">
        <Folder />
        <span className="font-['Noto_Sans_CJK_SC']">资格证</span>
      </Slot>
      <Slot className="w-[152px]">
        <Folder />
        <span className="tracking-[-0.2px]">typing</span>
      </Slot>
      <Slot className="w-[152px]">
        <div className="mr-[11px] flex h-8 w-8 items-center justify-center rounded-[2px] bg-[#ea3f48] font-['Noto_Sans_CJK_SC'] text-[9px] font-bold tracking-[-0.5px]">小红书</div>
        <span className="font-['Noto_Sans_CJK_SC']">小红书</span>
      </Slot>
      <Slot className="w-[228px]">
        <Folder />
        <span className="tracking-[-0.2px]">coding study</span>
      </Slot>
      <Slot className="w-[176px]">
        <div className="mr-[12px] flex h-8 w-8 items-center justify-center rounded-full bg-black">
          <SiOpenai size={22} />
        </div>
        <span className="tracking-[-0.1px]">Chat gpt</span>
      </Slot>
      <Slot className="w-[372px]">
        <svg width="32" height="24" viewBox="0 0 32 24" className="mr-[12px] shrink-0" fill="#4f6bf0">
          <path d="M31 2 C29 3.500 27.500 3 26 3 C24 2.500 22.500 1 22 0 C20.500 3 21.500 6.500 24 8 C22 9.500 20 8 18 5.500 C16 3 15 2 12 1.500 C5 0.500 0 6 1 12.500 C2 19 7 23.500 13.500 23 C16 23 18 22 19.500 21 C21 22 23 22.500 25 21.500 C23 21 22.500 20 22.500 19 C26 15.500 27 12 27 9 C30 8 31.500 5 31 2 Z M13 19 C7 18 4 13 4 9.500 C8 8 12 15 16.500 18.500 C15.500 19.200 14.500 19.200 13 19 Z M14 9 C16 7.500 19.500 10.500 19.500 14 C18 14 15.500 12 14 9 Z" fillRule="evenodd" />
        </svg>
        <span className="tracking-[-0.15px]">DeepSeek - Into th...</span>
      </Slot>
      <Slot className="w-[54px]">
        <svg width="20" height="18" viewBox="0 0 20 18" fill="none" stroke="#fff" strokeWidth="2.800">
          <path d="M1.500 1.500 L9 9 L1.500 16.500 M10.500 1.500 L18 9 L10.500 16.500" />
        </svg>
      </Slot>
      <Slot className="w-[36px]">
        <span className="h-8 w-[4px] rounded-full bg-[#463c35]" />
      </Slot>
      <Slot className="tracking-[-1.4px] [word-spacing:1.5px]">
        <Folder />
        모든 북마크
      </Slot>
    </div>
  );
}

/* ---------- web page ---------- */

const events = [
  { title: "고려대학교 소중대", latin: "2025", desc: "블록체인에 대하여" },
  { lead: "AI", title: "학술대회", desc: "인공지능 최신 기술 세미나" },
  { lead: "Web3", title: "개발자 밋업", desc: "탈중앙 기술을 배우는 개발자 네트워킹" },
];

function HomePage() {
  return (
    <div className="flex grow flex-col bg-[#f7f8fa] font-['Liberation_Sans','Noto_Sans_CJK_KR',sans-serif] text-[#333]">
      <header className="flex h-[116px] shrink-0 items-center justify-between border-b-2 border-[#dddddd] bg-[#f8f8f8] pr-[65px] pl-[64px]">
        <div className="pb-[1px] text-[44.8px] leading-none font-bold tracking-[-0.6px]">IbeonN</div>
        <nav className="flex gap-[48px] pb-[3px] text-[31px] leading-none font-medium tracking-[-0.8px] text-[#333] [word-spacing:2px]">
          <a>활동 대시보드</a>
          <a>마이페이지</a>
          <a>배지</a>
          <a>로그인</a>
        </nav>
      </header>
      <main className="ml-[552px] w-[1920px] pt-[112px]">
        <h1 className="text-[64px] leading-none font-bold tracking-[-3px] whitespace-nowrap [word-spacing:2.5px]">
          <span className="tracking-[-0.4px] [word-spacing:1px]">IbeonN </span>에 오신 것을 환영합니다!
        </h1>
        <h2 className="mt-[53px] -ml-px text-[40px] leading-none font-bold tracking-[-2.2px] [word-spacing:1px]">추천 이벤트</h2>
        <div className="mt-[27px] flex gap-[48px] overflow-hidden px-[48px] pt-[32px] pb-[32px]">
          {events.map((e) => (
            <article key={e.title} className="h-[167px] w-[597px] shrink-0 rounded-[32px] bg-white px-[38px] pt-[39px] shadow-[0_8px_24px_rgba(0,0,0,0.08)]">
              <h3 className="text-[35.2px] leading-none font-bold tracking-[-2.6px] whitespace-nowrap">
                {e.lead && <span className="tracking-[-0.6px]">{e.lead} </span>}
                {e.title}
                {e.latin && <span className="tracking-[-0.4px]"> {e.latin}</span>}
              </h3>
              <p className="mt-[23px] text-[28px] leading-none tracking-[-1.6px] whitespace-nowrap text-[#666] [word-spacing:2px]">{e.desc}</p>
            </article>
          ))}
        </div>
        <div className="h-[12px] w-[1403px] rounded-[6px] bg-[#cccccc]" />
      </main>
    </div>
  );
}

/* ---------- desktop ---------- */

const stars = Array.from({ length: 420 }, (_, i) => ({
  x: (i * 7919) % 3024,
  y: 2 + ((i * 4733) % 104),
  r: 0.8 + ((i * 31) % 10) / 6,
  c: ["#1d4a63", "#233c7c", "#1b5a72", "#2c3f6a"][i % 4],
}));

export default function App() {
  return (
    <div className="relative flex h-[1964px] w-[3024px] flex-col overflow-hidden bg-[linear-gradient(180deg,#254c7c_0%,#1d3c66_8%,#0b1426_60%,#0b1424_100%)] font-[Inter,'Noto_Sans_CJK_KR',sans-serif]">
      <Defs />
      <svg className="absolute bottom-0 left-0" width="3024" height="106" viewBox="0 0 3024 106">
        <rect width="3024" height="106" fill="#0a1323" />
        {stars.map((s, i) => (
          <circle key={i} cx={s.x} cy={s.y} r={s.r} fill={s.c} fillOpacity={0.25 + (0.6 * s.x) / 3024} />
        ))}
      </svg>
      <MenuBar />
      <div className="relative mt-[2px] flex h-[1782px] shrink-0 flex-col overflow-hidden rounded-[20px] border-t-2 border-[#8d8782] bg-[#403631]">
        <TabStrip />
        <div className="flex grow flex-col rounded-t-[16px] bg-[#615749]">
          <Toolbar />
          <BookmarksBar />
          <div className="h-[2px] shrink-0 bg-[#857c71]" />
          <HomePage />
        </div>
      </div>
      <Dock />
    </div>
  );
}
